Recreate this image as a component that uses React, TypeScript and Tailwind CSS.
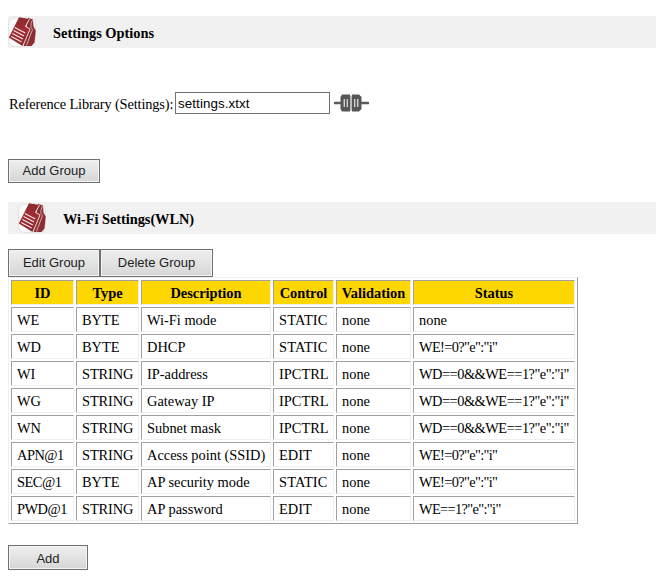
import type { ReactNode } from "react";

const columns = ["ID", "Type", "Description", "Control", "Validation", "Status"];

const rows = [
  ["WE", "BYTE", "Wi-Fi mode", "STATIC", "none", "none"],
  ["WD", "BYTE", "DHCP", "STATIC", "none", 'WE!=0?"e":"i"'],
  ["WI", "STRING", "IP-address", "IPCTRL", "none", 'WD==0&&WE==1?"e":"i"'],
  ["WG", "STRING", "Gateway IP", "IPCTRL", "none", 'WD==0&&WE==1?"e":"i"'],
  ["WN", "STRING", "Subnet mask", "IPCTRL", "none", 'WD==0&&WE==1?"e":"i"'],
  ["APN@1", "STRING", "Access point (SSID)", "EDIT", "none", 'WE!=0?"e":"i"'],
  ["SEC@1", "BYTE", "AP security mode", "STATIC", "none", 'WE!=0?"e":"i"'],
  ["PWD@1", "STRING", "AP password", "EDIT", "none", 'WE==1?"e":"i"'],
];

function cellTracking(text: string) {
  if (text.includes("&&")) return "tracking-[-0.5px]";
  if (text.includes('"')) return "tracking-[-0.65px]";
  if (text.includes("@")) return "tracking-[-0.5px]";
  if (text === "STATIC") return "tracking-[0.15px]";
  if (text === "STRING") return "tracking-[-0.1px]";
  return "";
}

function DocsIcon() {
  return (
    <svg width="28" height="30" viewBox="0 0 28 30" className="shrink-0">
      <defs>
        <linearGradient id="red" x1="0" y1="0" x2="0" y2="1">
          <stop offset="0" stopColor="#8a2b30" />
          <stop offset="0.5" stopColor="#a22d33" />
          <stop offset="1" stopColor="#842a2e" />
        </linearGradient>
      </defs>
      <rect x="0.500" y="1" width="27" height="28.500" rx="6" fill="#fafafa" stroke="#e2e2e2" />
      <path d="M20 1l5 1.500 .5 7 2.200 4-1.200 12-3 3.500h-8z" fill="#8b2d31" />
      <path d="M11 .3L21.500 2 17.500 9l4.200 3-7.200 17L.8 20.500z" fill="url(#red)" />
      <path d="M21.500 2l-4 7.500 4.500 2.500-7 17" fill="none" stroke="#ead6d7" strokeWidth="1" />
      <path d="M24.500 3c-1 2-2 5-1.500 7.500l1.500 2-6 16" fill="none" stroke="#d9b5b7" strokeWidth="0.900" />
      <path d="M6.800 10.500l10.500 5.500M5.600 13.500l10.500 5.500M4.400 16.500l10.500 5.500M3.200 19.500l10.500 5.500" stroke="#f5e4e5" strokeWidth="1.100" />
    </svg>
  );
}

function PlugIcon() {
  return (
    <svg width="35" height="20" viewBox="0 0 35 20" className="ml-[4px] shrink-0">
      <path d="M1 10h7M27 10h7" stroke="#5c5c5c" strokeWidth="2.600" strokeLinecap="round" />
      <path d="M8 1.500h8v17H8L6.500 16V4zM18 1.500h7L27.500 4v12L25 18.500h-7z" fill="#565656" />
      <path d="M16 2.500h2v15h-2z" fill="#bbb" />
      <path d="M10.300 6v8M13.300 6v8M20.700 6v8M23.700 6v8" stroke="#d0d0d0" strokeWidth="1.400" />
    </svg>
  );
}

function Button({ className, children }: { className: string; children: ReactNode }) {
  return (
    <button
      className={`flex shrink-0 items-center justify-center border border-[#707070] bg-gradient-to-b from-[#efefef] to-[#d6d6d6] font-['Liberation_Sans',Arial,sans-serif] text-[13px] leading-4 text-[#222] shadow-[inset_0_0_0_1px_#f4f4f4] ${className}`}
    >
      {children}
    </button>
  );
}

export default function App() {
  return (
    <main className="flex h-[584px] w-[656px] flex-col overflow-hidden bg-white pl-2 pt-4 font-['Liberation_Serif','Times_New_Roman',serif] text-[14.4px] leading-4 text-black">
      <header className="flex h-8 shrink-0 items-center bg-[#f1f1f1]">
        <DocsIcon />
        <h1 className="ml-[17px] mt-px font-bold">Settings Options</h1>
      </header>

      <div className="mt-11 flex h-[22px] shrink-0 items-center">
        <label className="w-[166px] whitespace-nowrap pl-px pt-[2px] tracking-[-0.15px]">
          Reference Library (Settings):
        </label>
        <input
          defaultValue="settings.xtxt"
          className="ml-px h-[22px] w-[155px] border border-[#707070] bg-white px-[2px] font-['Liberation_Sans',Arial,sans-serif] text-[13.33px] tracking-[0.1px] text-black outline-none"
        />
        <PlugIcon />
      </div>

      <Button className="mt-[45px] h-6 w-[92px]">Add Group</Button>

      <header className="mt-[19px] flex h-8 shrink-0 items-center bg-[#f1f1f1] pl-[10px]">
        <DocsIcon />
        <h2 className="ml-[17px] mt-px font-bold tracking-[-0.05px]">Wi-Fi Settings(WLN)</h2>
      </header>

      <div className="mt-[15px] flex shrink-0">
        <Button className="h-7 w-[92px]">Edit Group</Button>
        <Button className="h-7 w-[113px]">Delete Group</Button>
      </div>

      <table className="w-[570px] shrink-0 table-fixed border-separate border-spacing-[2px] border border-b-[#a0a0a0] border-l-[#f0f0f0] border-r-[#a0a0a0] border-t-[#f0f0f0]">
        <colgroup>
          <col className="w-[63px]" />
          <col className="w-[63px]" />
          <col className="w-[130px]" />
          <col className="w-[61px]" />
          <col className="w-[75px]" />
          <col className="w-[162px]" />
        </colgroup>
        <thead>
          <tr className="h-[25px]">
            {columns.map((name) => (
              <th
                key={name}
                className="whitespace-nowrap border border-b-[#f0f0f0] border-l-[#a0a0a0] border-r-[#f0f0f0] border-t-[#a0a0a0] bg-[#ffd700] p-0 pt-px font-bold"
              >
                {name}
              </th>
            ))}
          </tr>
        </thead>
        <tbody>
          {rows.map((row) => (
            <tr key={row[0]} className="h-[25px]">
              {row.map((cell, i) => (
                <td
                  key={i}
                  className={`whitespace-nowrap border border-b-[#f0f0f0] border-l-[#a0a0a0] border-r-[#f0f0f0] border-t-[#a0a0a0] p-0 pl-[5px] pt-px ${cellTracking(cell)}`}
                >
                  {cell}
                </td>
              ))}
            </tr>
          ))}
        </tbody>
      </table>

      <Button className="mt-[21px] h-[25px] w-20 pt-[3px]">Add</Button>
    </main>
  );
}
